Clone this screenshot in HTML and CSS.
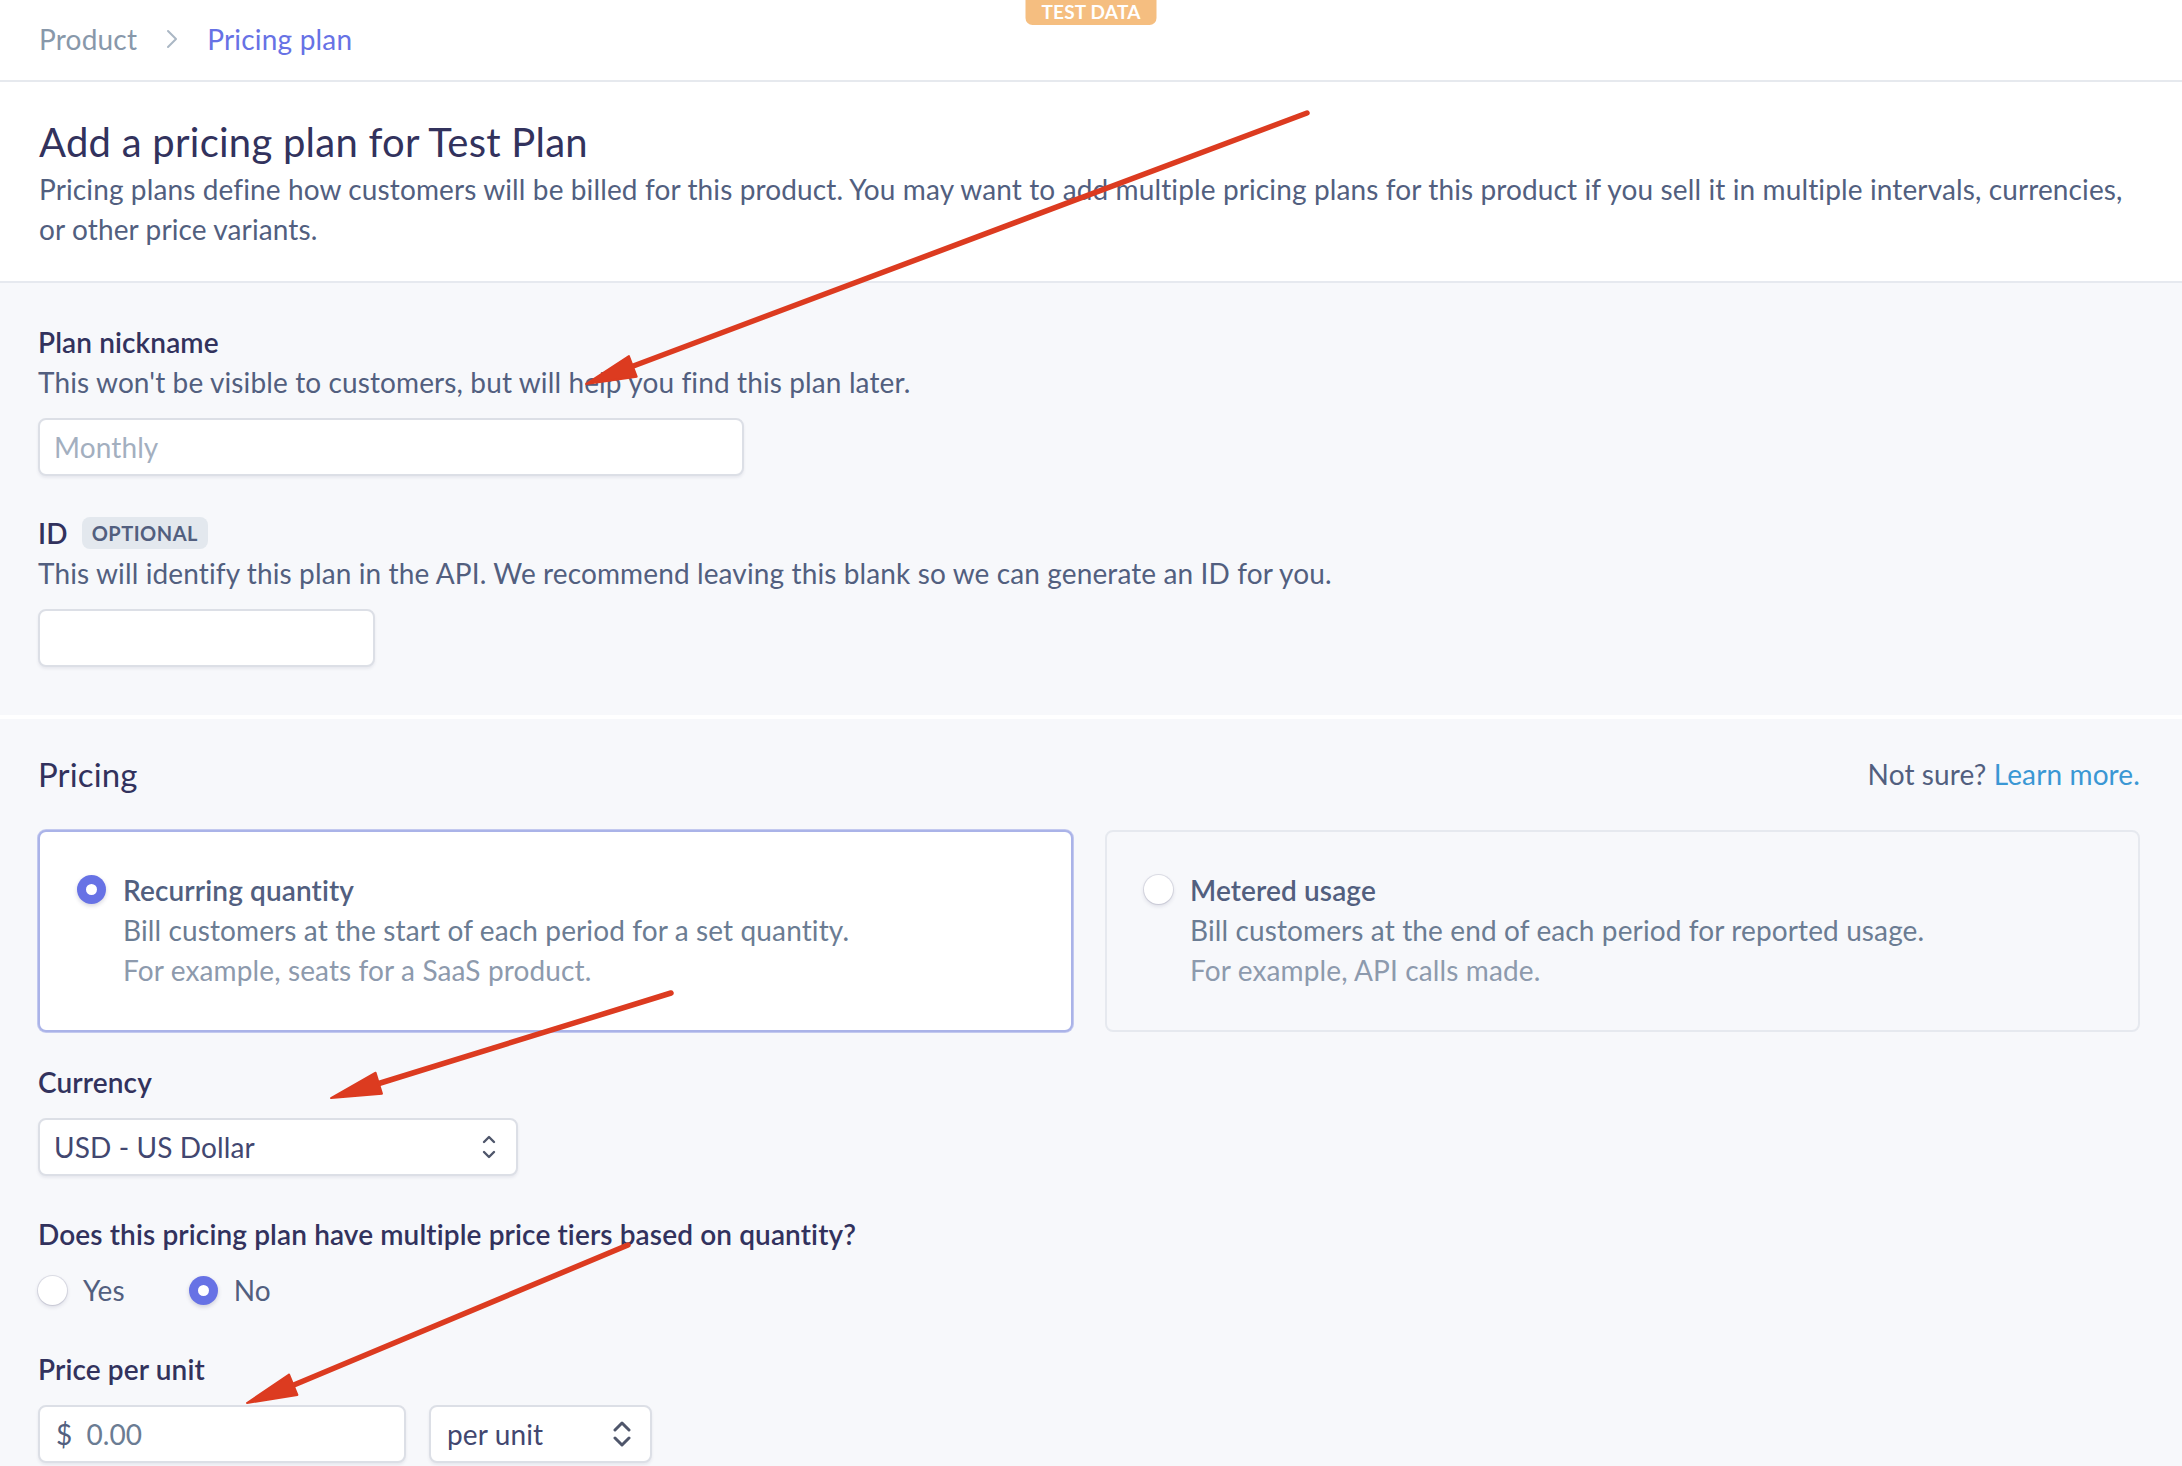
FILE: index.html
```html
<!DOCTYPE html>
<html lang="en">
<head>
<meta charset="utf-8">
<title>Add a pricing plan</title>
<link rel="stylesheet" href="styles.css">
</head>
<body>
<div class="page">
  <header class="topbar">
    <nav class="crumbs">
      <span class="crumb">Product</span>
      <svg class="crumb-sep" viewBox="0 0 12 20" width="12" height="20"><polyline points="2,2 10,10 2,18" fill="none" stroke="#aab7c4" stroke-width="2" stroke-linecap="round" stroke-linejoin="round"/></svg>
      <span class="crumb crumb-current">Pricing plan</span>
    </nav>
    <div class="test-badge">TEST DATA</div>
  </header>

  <section class="intro">
    <h1 class="title">Add a pricing plan for Test Plan</h1>
    <p class="lead">Pricing plans define how customers will be billed for this product. You may want to add multiple pricing plans for this product if you sell it in multiple intervals, currencies, or other price variants.</p>
  </section>

  <section class="panel panel-basic">
    <div class="field">
      <div class="label">Plan nickname</div>
      <div class="help">This won't be visible to customers, but will help you find this plan later.</div>
      <div class="input input-nick"><span class="placeholder">Monthly</span></div>
    </div>
    <div class="field field-id">
      <div class="label">ID <span class="tag">OPTIONAL</span></div>
      <div class="help">This will identify this plan in the API. We recommend leaving this blank so we can generate an ID for you.</div>
      <div class="input input-id"></div>
    </div>
  </section>

  <section class="panel panel-pricing">
    <div class="pricing-head">
      <h2 class="subtitle">Pricing</h2>
      <div class="hint">Not sure? <span class="link">Learn more.</span></div>
    </div>

    <div class="choices">
      <div class="choice choice-on">
        <span class="radio radio-on"></span>
        <div class="choice-text">
          <div class="choice-title">Recurring quantity</div>
          <div class="choice-desc">Bill customers at the start of each period for a set quantity.</div>
          <div class="choice-eg">For example, seats for a SaaS product.</div>
        </div>
      </div>
      <div class="choice">
        <span class="radio"></span>
        <div class="choice-text">
          <div class="choice-title">Metered usage</div>
          <div class="choice-desc">Bill customers at the end of each period for reported usage.</div>
          <div class="choice-eg">For example, API calls made.</div>
        </div>
      </div>
    </div>

    <div class="field field-currency">
      <div class="label">Currency</div>
      <div class="input select select-currency">
        <span class="value">USD - US Dollar</span>
        <svg class="chev chev-sm" viewBox="0 0 14 24" width="14" height="24"><polyline points="2,7 7,2 12,7" fill="none" stroke="#4f566b" stroke-width="2.4" stroke-linecap="round" stroke-linejoin="round"/><polyline points="2,17 7,22 12,17" fill="none" stroke="#4f566b" stroke-width="2.4" stroke-linecap="round" stroke-linejoin="round"/></svg>
      </div>
    </div>

    <div class="field field-tiers">
      <div class="label">Does this pricing plan have multiple price tiers based on quantity?</div>
      <div class="radio-row">
        <label class="opt"><span class="radio"></span><span class="opt-text">Yes</span></label>
        <label class="opt"><span class="radio radio-on"></span><span class="opt-text">No</span></label>
      </div>
    </div>

    <div class="field field-price">
      <div class="label">Price per unit</div>
      <div class="price-row">
        <div class="input input-price"><span class="cur">$</span><span class="amount">0.00</span></div>
        <div class="input select select-unit">
          <span class="value">per unit</span>
          <svg class="chev" viewBox="0 0 20 26" width="20" height="26"><polyline points="3,9 10,2 17,9" fill="none" stroke="#4f566b" stroke-width="3" stroke-linecap="round" stroke-linejoin="round"/><polyline points="3,17 10,24 17,17" fill="none" stroke="#4f566b" stroke-width="3" stroke-linecap="round" stroke-linejoin="round"/></svg>
        </div>
      </div>
    </div>
  </section>

  <svg class="annotations" viewBox="0 0 2182 1466" width="2182" height="1466">
    <g fill="#dc3b20" stroke="#dc3b20" stroke-linecap="round">
      <line x1="1307" y1="113" x2="628" y2="368" stroke-width="5.5"/>
      <polygon points="586,384 636.7,376.7 628.9,356.1" stroke-width="2" stroke-linejoin="round"/>
      <line x1="671" y1="993" x2="374" y2="1085" stroke-width="5.5"/>
      <polygon points="331,1098 382,1093.7 375.6,1072.7" stroke-width="2" stroke-linejoin="round"/>
      <line x1="628" y1="1245" x2="289" y2="1387" stroke-width="5.5"/>
      <polygon points="247,1403 297.4,1394.9 289,1374.5" stroke-width="2" stroke-linejoin="round"/>
    </g>
  </svg>
</div>
</body>
</html>
```

FILE: styles.css
```css
* { box-sizing: border-box; }

html, body {
  margin: 0;
  padding: 0;
}

body {
  background: #f7f8fb;
  font-family: Lato, "Open Sans", "Noto Sans", sans-serif;
  color: #32325d;
  -webkit-font-smoothing: antialiased;
}

.page {
  position: relative;
  width: 2182px;
  height: 1466px;
  overflow: hidden;
  background: #f7f8fb;
  font-size: 28px;
  letter-spacing: 0.12px;
}

/* top bar */
.topbar {
  position: relative;
  height: 82px;
  background: #fff;
  border-bottom: 2px solid #e6e9ee;
  display: flex;
  align-items: center;
  padding: 0 0 2px 39px;
}

.crumbs {
  display: flex;
  align-items: center;
  gap: 29px;
  font-size: 28px;
  line-height: 40px;
  letter-spacing: 0.2px;
}

.crumb { color: #8898aa; }
.crumb-current { color: #6772e5; }
.crumb-sep { flex: none; }

.test-badge {
  position: absolute;
  top: 0;
  left: 50%;
  transform: translateX(-50%);
  width: 131px;
  height: 25px;
  background: #f5be80;
  color: #fff;
  font-size: 19px;
  font-weight: 700;
  letter-spacing: 0.2px;
  line-height: 23px;
  text-align: center;
  border-radius: 0 0 7px 7px;
}

/* intro */
.intro {
  background: #fff;
  border-bottom: 2px solid #e6e9ef;
  padding: 36px 40px 32px 39px;
}

.title {
  margin: 0;
  font-size: 40px;
  font-weight: 400;
  line-height: 48px;
  letter-spacing: 0.25px;
  color: #32325d;
}

.lead {
  margin: 3px 0 0;
  line-height: 40px;
  color: #525f7f;
}

/* panels */
.panel {
  padding: 39px 42px 0 38px;
}

.panel-basic {
  height: 432px;
}

.panel-pricing {
  border-top: 4px solid #fff;
  padding-top: 31px;
}

.label {
  line-height: 40px;
  font-weight: 600;
  color: #32325d;
  display: flex;
  align-items: center;
}

.help {
  line-height: 40px;
  color: #525f7f;
}

.tag {
  display: inline-block;
  margin-left: 14px;
  padding: 0 10px;
  height: 32px;
  line-height: 32px;
  font-size: 20px;
  font-weight: 700;
  color: #525f7f;
  background: #e3e8ee;
  border-radius: 8px;
  letter-spacing: 0.5px;
}

.field-id { margin-top: 37px; }

.input {
  margin-top: 16px;
  height: 58px;
  background: #fff;
  border: 2px solid #dcdfe6;
  border-radius: 8px;
  box-shadow: 0 2px 3px rgba(50, 50, 93, 0.08);
  display: flex;
  align-items: center;
  color: #32325d;
}

.input-nick { width: 706px; padding-left: 14px; }
.input-id { width: 337px; }

.placeholder { color: #a3afbf; }

/* pricing heading */
.pricing-head {
  display: flex;
  justify-content: space-between;
  align-items: center;
  height: 48px;
}

.subtitle {
  margin: 0;
  font-size: 33px;
  font-weight: 400;
  line-height: 48px;
  color: #32325d;
}

.hint {
  line-height: 40px;
  color: #525f7f;
}

.link { color: #3a97d4; }

/* choice cards */
.choices {
  margin-top: 32px;
  display: grid;
  grid-template-columns: 1fr 1fr;
  gap: 32px;
}

.choice {
  display: flex;
  align-items: flex-start;
  gap: 17px;
  height: 202px;
  padding: 38px 37px;
  border: 2px solid #e6e9ef;
  border-radius: 8px;
  background: #f7f8fb;
}

.choice-on {
  background: #fff;
  border-color: #aab3e8;
  box-shadow: 0 0 0 1px #c3c9ef;
}

.choice-text {
  line-height: 40px;
}

.choice-title {
  font-weight: 600;
  color: #525f7f;
}

.choice-desc { color: #6b7c93; }
.choice-eg { color: #8d9aad; }

.radio {
  flex: none;
  width: 29px;
  height: 29px;
  margin-top: 5px;
  border-radius: 50%;
  background: #fff;
  box-shadow: 0 0 0 1px rgba(50, 50, 93, 0.12), 0 2px 4px rgba(50, 50, 93, 0.16);
  position: relative;
}

.radio-on {
  background: #6772e5;
  box-shadow: 0 2px 4px rgba(50, 50, 93, 0.2);
}

.radio-on::after {
  content: "";
  position: absolute;
  left: 9px;
  top: 9px;
  width: 11px;
  height: 11px;
  border-radius: 50%;
  background: #fff;
}

/* currency */
.field-currency { margin-top: 30px; }

.select {
  justify-content: space-between;
  padding: 0 20px 0 14px;
  color: #424770;
}

.select-currency { width: 480px; }

.field-tiers { margin-top: 38px; }

.radio-row {
  margin-top: 16px;
  display: flex;
  gap: 64px;
  height: 40px;
  align-items: center;
}

.opt {
  display: flex;
  align-items: center;
  gap: 16px;
  color: #525f7f;
}

.opt .radio { margin-top: 0; }

.field-price { margin-top: 39px; }

.price-row {
  display: flex;
  gap: 23px;
}

.input-price {
  width: 368px;
  padding-left: 16px;
  color: #525f7f;
}

.cur { margin-right: 14px; color: #525f7f; }
.amount { color: #6b7c93; }

.select-unit {
  width: 223px;
  padding: 0 18px 0 16px;
}

.chev { flex: none; }

/* annotation overlay */
.annotations {
  position: absolute;
  left: 0;
  top: 0;
  pointer-events: none;
}
```
